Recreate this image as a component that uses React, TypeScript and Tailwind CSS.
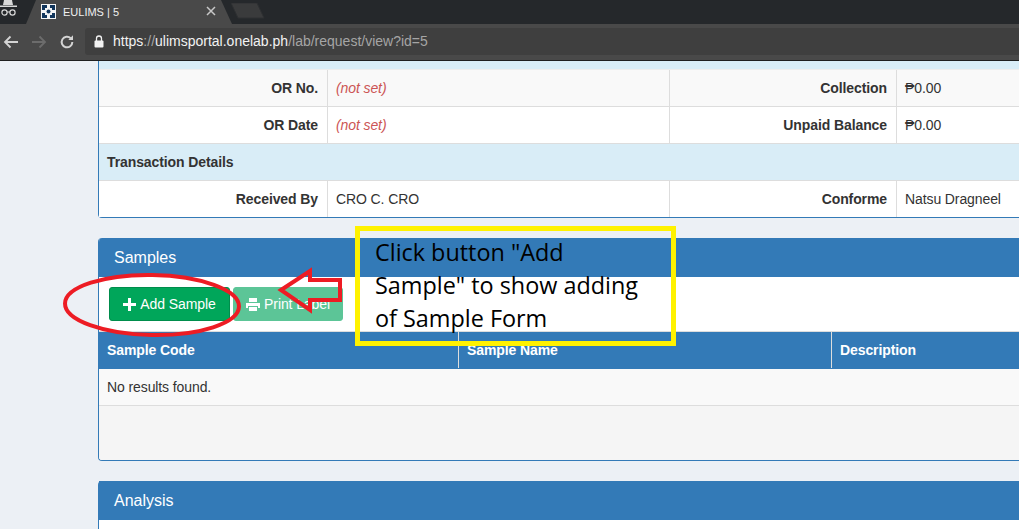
import React from "react";

const sans = "font-['Liberation_Sans',Arial,sans-serif]";

function Row({ zebra, a, b, c, d }: { zebra?: boolean; a: string; b: React.ReactNode; c: string; d: React.ReactNode }) {
  const bg = zebra ? "bg-[#f9f9f9]" : "bg-white";
  return (
    <div className="grid grid-cols-[229px_342px_227px_1fr] h-[37px] border-b border-[#ddd] last:border-b-0 last:h-[36px]">
      <div className={`border-r border-[#ddd] font-bold pl-2 pr-[9px] flex items-center justify-end ${bg}`}>{a}</div>
      <div className={`border-r border-[#ddd] px-2 flex items-center ${bg}`}>{b}</div>
      <div className={`border-r border-[#ddd] font-bold pl-2 pr-[9px] flex items-center justify-end ${bg}`}>{c}</div>
      <div className={`px-2 flex items-center ${bg}`}>{d}</div>
    </div>
  );
}

const NotSet = () => <span className="italic text-[#c55]">(not set)</span>;

export default function App() {
  return (
    <div className={`relative w-[1019px] h-[529px] overflow-hidden bg-[#ecf0f5] ${sans} text-[14px] tracking-[-0.1px] text-[#333]`}>
      {/* Browser chrome */}
      <div className="relative h-[24px] bg-[#25282b] flex">
        <div className="w-[33px] relative">
          <svg width="20" height="24" viewBox="0 0 20 24" className="absolute left-0 top-0">
            <path d="M4 0h8l1 5H3z" fill="#d8d8d8" />
            <rect x="0" y="5.500" width="17" height="1.500" fill="#d8d8d8" />
            <circle cx="4.500" cy="12.500" r="2.600" fill="none" stroke="#d8d8d8" strokeWidth="1.200" />
            <circle cx="12.500" cy="12.500" r="2.600" fill="none" stroke="#d8d8d8" strokeWidth="1.200" />
            <path d="M7 12h3" stroke="#d8d8d8" strokeWidth="1" />
          </svg>
        </div>
        <svg width="206" height="24" viewBox="0 0 206 24" className="absolute left-[26px] top-0">
          <path d="M0 24L10 0H195L206 24z" fill="#494949" />
        </svg>
        <svg width="34" height="16" viewBox="0 0 34 16" className="absolute left-[231px] top-[3px]">
          <path d="M0 0H26L33 15H7z" fill="#3a3b3c" stroke="#2e3032" />
        </svg>
        <div className="relative ml-[8px] flex items-center h-full w-[186px] text-[11px] tracking-normal text-[#f0f0f0]">
          <svg width="15" height="15" viewBox="0 0 15 15" className="mr-[7px] mb-[1px]">
            <rect width="15" height="15" fill="#f5f5f5" />
            <path d="M1 1h5v3H4v2H1zM9 1h5v5h-3V4H9zM1 9h3v2h2v3H1zM11 9h3v5H9v-3h2z" fill="#12365c" />
            <circle cx="7.500" cy="7.500" r="2" fill="#12365c" />
          </svg>
          <span>EULIMS | 5</span>
          <svg width="10" height="10" viewBox="0 0 10 10" className="absolute left-[165px] top-[6px]">
            <path d="M1 1l8 8M9 1l-8 8" stroke="#c8c8c8" strokeWidth="1.500" />
          </svg>
        </div>
      </div>
      <div className="h-[36px] bg-[#494949] flex items-center">
        <div className="flex items-center w-[85px] shrink-0 pl-[3px] gap-[12px]">
          <svg width="16" height="14" viewBox="0 0 16 14"><path d="M15 7H2M7.500 1.500L2 7l5.500 5.500" fill="none" stroke="#d4d4d4" strokeWidth="1.800" /></svg>
          <svg width="16" height="14" viewBox="0 0 16 14"><path d="M1 7h13M8.500 1.500L14 7l-5.500 5.500" fill="none" stroke="#6c6c6c" strokeWidth="1.800" /></svg>
          <svg width="16" height="16" viewBox="0 0 24 24"><path d="M20 12a8 8 0 1 1-2.400-5.700" fill="none" stroke="#d4d4d4" strokeWidth="3" /><path d="M21 2v7h-7z" fill="#d4d4d4" /></svg>
        </div>
        <div className="flex items-center flex-1 h-[27px] mb-[1px] bg-[#3f3f3f] rounded-l-[3px] text-[14px] tracking-normal">
          <svg width="10" height="13" viewBox="0 0 10 13" className="ml-[9px] mr-[9px]">
            <path d="M2.500 6V3.500a2.500 2.500 0 0 1 5 0V6" fill="none" stroke="#f2f2f2" strokeWidth="1.300" />
            <rect x="0.500" y="5.500" width="9" height="7" rx="1" fill="#f2f2f2" />
          </svg>
          <span className="text-[#f2f2f2]">https</span>
          <span className="text-[#a5a5a5]">://</span>
          <span className="text-[#f2f2f2]">ulimsportal.onelab.ph</span>
          <span className="text-[#a5a5a5]">/lab/request/view?id=5</span>
        </div>
      </div>
      <div className="h-px bg-[#1f1f1f]" />

      {/* Page */}
      <div className="ml-[98px] w-[1000px]">
        {/* Details panel */}
        <div className="border-l border-b border-[#337ab7] rounded-bl-[4px] bg-white">
          <div className="h-[9px] bg-[#d9edf7] border-b border-[#eee]" />
          <Row zebra a="OR No." b={<NotSet />} c="Collection" d="₱0.00" />
          <Row a="OR Date" b={<NotSet />} c="Unpaid Balance" d="₱0.00" />
          <div className="h-[37px] bg-[#d9edf7] font-bold flex items-center px-2 border-b border-[#ddd]">Transaction Details</div>
          <Row a="Received By" b="CRO C. CRO" c="Conforme" d="Natsu Dragneel" />
        </div>

        {/* Samples panel */}
        <div className="mt-[20px] border-l border-b border-[#337ab7] rounded-l-[4px] bg-white h-[223px] overflow-hidden">
          <div className="h-[39px] bg-[#337ab7] text-white text-[16px] tracking-normal flex items-center px-[15px]">Samples</div>
          <div className="h-[55px] flex items-start gap-[3px] pl-[10px] pt-[10px] border-b border-[#ddd]">
            <button className="h-[34px] w-[121px] rounded-[3px] bg-[#00a65a] border border-[#008d4c] text-white flex items-center justify-center gap-[4px]">
              <svg width="13" height="13" viewBox="0 0 13 13"><path d="M5 0h3v5h5v3H8v5H5V8H0V5h5z" fill="#fff" /></svg>
              Add Sample
            </button>
            <button className="h-[34px] w-[110px] rounded-[3px] bg-[#5cc597] border border-[#5cc597] text-white flex items-center justify-center gap-[4px]">
              <svg width="14" height="13" viewBox="0 0 14 13"><path d="M3 0h8v4H3zM0 5h14v5h-2V8H2v2H0zM3 9h8v4H3z" fill="#fff" /></svg>
              Print Label
            </button>
          </div>
          <div className="grid grid-cols-[360px_373px_1fr] h-[37px] pb-px bg-[#337ab7] text-white font-bold">
            <div className="flex items-center px-2 border-r border-[#ddd]">Sample Code</div>
            <div className="flex items-center px-2 border-r border-[#ddd]">Sample Name</div>
            <div className="flex items-center px-2">Description</div>
          </div>
          <div className="h-[37px] bg-[#f9f9f9] flex items-center px-2 border-b border-[#ddd]">No results found.</div>
          <div className="h-[54px] bg-[#f5f5f5]" />
        </div>

        {/* Analysis panel */}
        <div className="mt-[20px] border-l border-[#337ab7] rounded-tl-[4px] bg-white h-[60px]">
          <div className="h-[39px] bg-[#337ab7] text-white text-[16px] tracking-normal flex items-center px-[15px]">Analysis</div>
        </div>
      </div>

      {/* Annotation overlays */}
      <div className="absolute left-[355px] top-[226px] w-[321px] h-[120px] border-[5px] border-[#fff200] pl-[15px] font-['Open_Sans',sans-serif] text-[23.4px] tracking-normal leading-[33px] text-black">
        <div className="w-[275px] pt-[5px]">Click button "Add Sample" to show adding of Sample Form</div>
      </div>
      <svg width="300" height="90" viewBox="0 0 300 90" className="absolute left-[60px] top-[265px]">
        <ellipse cx="92" cy="40" rx="87" ry="30" fill="none" stroke="#ed1c24" strokeWidth="4" transform="rotate(1 92 40)" />
        <path d="M221 25L250 6V15H280V35H250V45z" fill="none" stroke="#ed1c24" strokeWidth="4" />
      </svg>
    </div>
  );
}
